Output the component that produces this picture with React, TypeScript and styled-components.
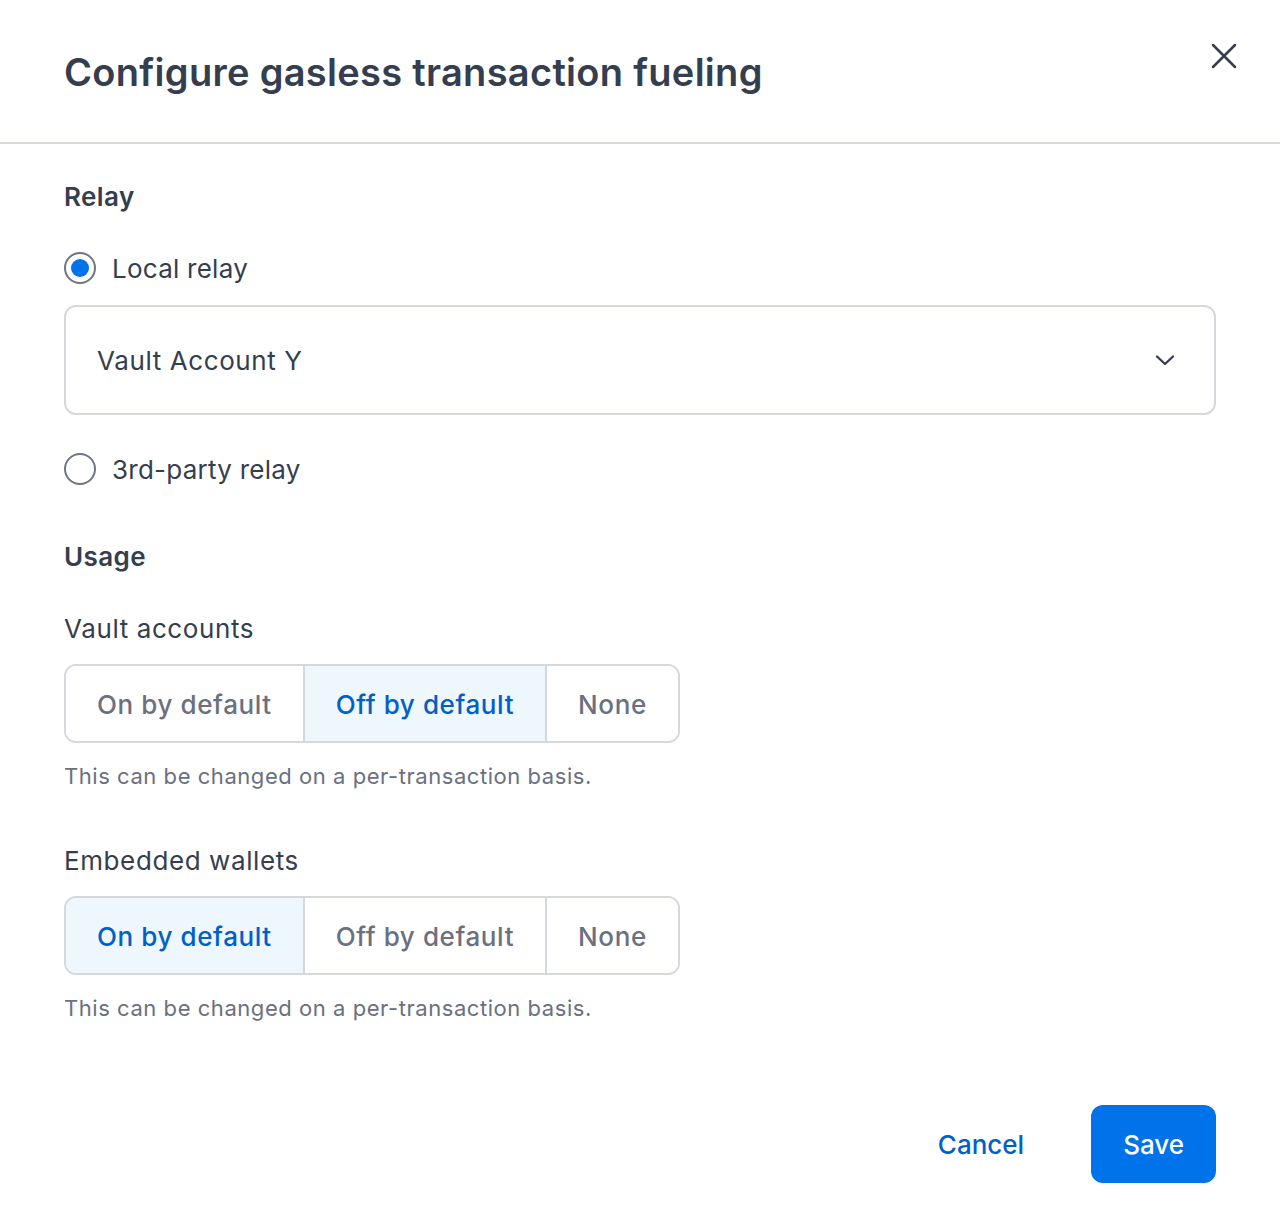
import React, { useState } from "react";
import styled, { createGlobalStyle } from "styled-components";

const Global = createGlobalStyle`
  html, body { margin: 0; padding: 0; background: #fff; }
  body { font-family: Inter, "Open Sans", "Liberation Sans", sans-serif; color: #353e4e; }
  * { box-sizing: border-box; }
`;

const Dialog = styled.div`
  width: 1280px;
  min-height: 1216px;
  background: #fff;
  display: flex;
  flex-direction: column;
`;

const Header = styled.header`
  height: 144px;
  border-bottom: 2px solid #d5d8dd;
  display: flex;
  align-items: flex-start;
  justify-content: space-between;
  padding: 48px 40px 0 64px;
`;

const Title = styled.h1`
  margin: 0;
  font-size: 38px;
  line-height: 48px;
  font-weight: 600;
  color: #353e4e;
  letter-spacing: 0.3px;
`;

const CloseButton = styled.button`
  width: 32px;
  height: 32px;
  border: 0;
  background: transparent;
  padding: 0;
  margin-top: -8px;
  cursor: pointer;
  display: flex;
  align-items: center;
  justify-content: center;
`;

const Body = styled.div`
  padding: 37px 64px 0 64px;
  display: flex;
  flex-direction: column;
`;

const SectionTitle = styled.h2<{ $mt?: number }>`
  margin: ${(p) => p.$mt ?? 0}px 0 0 0;
  font-size: 26px;
  line-height: 32px;
  font-weight: 600;
  color: #353e4e;
  letter-spacing: 0.4px;
`;

const RadioRow = styled.label<{ $mt: number }>`
  margin-top: ${(p) => p.$mt}px;
  display: flex;
  align-items: center;
  gap: 16px;
  height: 32px;
  font-size: 26px;
  color: #353e4e;
  letter-spacing: 0.25px;
  cursor: pointer;
`;

const RadioCircle = styled.span<{ $checked: boolean }>`
  width: 32px;
  height: 32px;
  border-radius: 50%;
  border: 2px solid #6f7582;
  display: flex;
  align-items: center;
  justify-content: center;
  flex-shrink: 0;
  &::after {
    content: "";
    width: 18px;
    height: 18px;
    border-radius: 50%;
    background: ${(p) => (p.$checked ? "#0073ea" : "transparent")};
  }
`;

const Select = styled.div`
  margin-top: 21px;
  height: 110px;
  border: 2px solid #d5d8dd;
  border-radius: 12px;
  display: flex;
  align-items: center;
  justify-content: space-between;
  padding: 0 38px 0 31px;
  font-size: 26px;
  letter-spacing: 0.6px;
  color: #353e4e;
`;

const FieldLabel = styled.div<{ $mt: number }>`
  margin-top: ${(p) => p.$mt}px;
  font-size: 26px;
  line-height: 32px;
  letter-spacing: 0.6px;
  color: #353e4e;
`;

const Segmented = styled.div`
  margin-top: 19px;
  display: inline-flex;
  align-self: flex-start;
  height: 79px;
  border: 2px solid #d5d8dd;
  border-radius: 12px;
  overflow: hidden;
`;

const Segment = styled.button<{ $active: boolean }>`
  border: 0;
  border-left: 2px solid #d5d8dd;
  &:first-child { border-left: 0; }
  background: ${(p) => (p.$active ? "#eef6fe" : "#fff")};
  color: ${(p) => (p.$active ? "#0060c7" : "#6a7080")};
  font-family: inherit;
  font-size: 26px;
  font-weight: 500;
  letter-spacing: 0.6px;
  padding: 1px 31px 0 31px;
  cursor: pointer;
`;

const Helper = styled.p`
  margin: 19px 0 0 0;
  font-size: 22px;
  line-height: 28px;
  letter-spacing: 0.55px;
  color: #6a7080;
`;

const Footer = styled.footer`
  margin-top: 83px;
  padding: 0 64px;
  display: flex;
  justify-content: flex-end;
  align-items: center;
  gap: 35px;
`;

const TextButton = styled.button`
  border: 0;
  background: transparent;
  color: #0060c7;
  font-family: inherit;
  font-size: 26px;
  font-weight: 500;
  height: 78px;
  padding: 0 32px;
  cursor: pointer;
`;

const PrimaryButton = styled.button`
  border: 0;
  background: #0073ea;
  color: #fff;
  font-family: inherit;
  font-size: 26px;
  font-weight: 500;
  height: 78px;
  padding: 0 32px;
  border-radius: 12px;
  cursor: pointer;
`;

const options = ["On by default", "Off by default", "None"];

export default function App() {
  const [relay, setRelay] = useState<"local" | "third">("local");
  const [vault, setVault] = useState(1);
  const [wallets, setWallets] = useState(0);

  return (
    <>
      <Global />
      <Dialog>
        <Header>
          <Title>Configure gasless transaction fueling</Title>
          <CloseButton aria-label="Close">
            <svg width="28" height="28" viewBox="0 0 28 28" fill="none">
              <path d="M3 3L25 25M25 3L3 25" stroke="#353e4e" strokeWidth="2.5" strokeLinecap="round" />
            </svg>
          </CloseButton>
        </Header>
        <Body>
          <SectionTitle>Relay</SectionTitle>
          <RadioRow $mt={39} onClick={() => setRelay("local")}>
            <RadioCircle $checked={relay === "local"} />
            Local relay
          </RadioRow>
          <Select>
            <span>Vault Account Y</span>
            <svg width="22" height="14" viewBox="0 0 22 14" fill="none">
              <path d="M3 3.5L11 11L19 3.5" stroke="#353e4e" strokeWidth="2.3" strokeLinecap="round" strokeLinejoin="round" />
            </svg>
          </Select>
          <RadioRow $mt={38} onClick={() => setRelay("third")}>
            <RadioCircle $checked={relay === "third"} />
            3rd-party relay
          </RadioRow>

          <SectionTitle $mt={56}>Usage</SectionTitle>
          <FieldLabel $mt={40}>Vault accounts</FieldLabel>
          <Segmented>
            {options.map((o, i) => (
              <Segment key={o} $active={vault === i} onClick={() => setVault(i)}>
                {o}
              </Segment>
            ))}
          </Segmented>
          <Helper>This can be changed on a per-transaction basis.</Helper>

          <FieldLabel $mt={55}>Embedded wallets</FieldLabel>
          <Segmented>
            {options.map((o, i) => (
              <Segment key={o} $active={wallets === i} onClick={() => setWallets(i)}>
                {o}
              </Segment>
            ))}
          </Segmented>
          <Helper>This can be changed on a per-transaction basis.</Helper>
        </Body>
        <Footer>
          <TextButton>Cancel</TextButton>
          <PrimaryButton>Save</PrimaryButton>
        </Footer>
      </Dialog>
    </>
  );
}
